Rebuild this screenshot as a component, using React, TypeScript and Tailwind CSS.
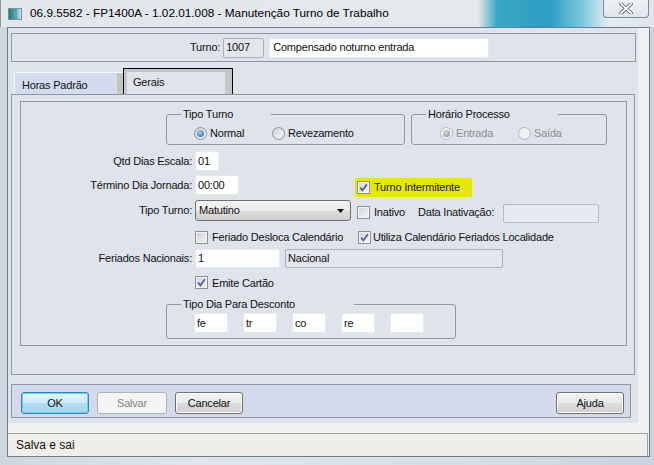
import { ReactNode } from "react";

function Check({ checked }: { checked?: boolean }) {
    return (
        <span className="w-[13px] h-[13px] shrink-0 border border-[#8e8f8f] bg-[linear-gradient(135deg,#cdd1d7,#f7f7f7)] flex items-center justify-center shadow-[inset_0_0_0_1px_#f4f4f4]">
            {checked && (
                <svg width="9" height="9" viewBox="0 0 9 9">
                    <path d="M1.2 4.6 L3.4 7.4 L7.9 1.2" stroke="#4b5d8f" strokeWidth="1.7" fill="none" />
                </svg>
            )}
        </span>
    )
}

function Radio({ checked, disabled }: { checked?: boolean, disabled?: boolean }) {
    return (
        <span className={"w-[13px] h-[13px] shrink-0 rounded-full border flex items-center justify-center " + (disabled ? "border-[#b5b8bc] bg-[#f0f0f0]" : "border-[#8e8f8f] bg-[linear-gradient(135deg,#cfd3d8,#f8f8f8)]")}>
            {checked && (
                <span className={"w-[7px] h-[7px] rounded-full " + (disabled ? "bg-[radial-gradient(circle_at_40%_35%,#d8d8d8,#8a8a8a)]" : "bg-[radial-gradient(circle_at_40%_35%,#9fd3f7,#1f5ea8)]")} />
            )}
        </span>
    )
}

function Field({ w, h = 20, value, gray, className = "" }: { w: number, h?: number, value?: string, gray?: boolean, className?: string }) {
    return (
        <div
            className={"shrink-0 rounded-[2px] border flex items-center px-[2px] " + (gray ? "bg-[#e3e6ed] border-[#aab1ba] " : "bg-white border-[#e6eaef] ") + className}
            style={{ width: w, height: h }}
        >
            {value}
        </div>
    )
}

function Group({ title, legendW, className = "", children }: { title: string, legendW: number, className?: string, children: ReactNode }) {
    return (
        <div className={"shrink-0 border border-[#8e97a3] rounded-[3px] flex flex-col " + className}>
            <span className="-mt-[8px] ml-[14px] h-[14px] leading-[14px] pl-[2px] bg-[#dfe3ec] self-start" style={{ width: legendW }}>{title}</span>
            {children}
        </div>
    )
}

function Button({ children, kind = "normal" }: { children: ReactNode, kind?: "ok" | "disabled" | "normal" }) {
    const look = {
        ok: "border-[#3c7fb1] bg-[linear-gradient(#e5f5fd,#c9e9f9_50%,#b2ddf4_51%,#a6d6f1)] shadow-[inset_0_0_0_1px_#6ad2f5] text-[#111]",
        disabled: "border-[#adb2b5] bg-[#f4f4f4] text-[#838383]",
        normal: "border-[#707070] bg-[linear-gradient(#f2f2f2,#ebebeb_50%,#dddddd_51%,#cfcfcf)] shadow-[inset_0_0_0_1px_#fbfbfb] text-[#111]",
    }[kind]
    return (
        <div className={"h-[22px] rounded-[3px] border flex items-center justify-center shrink-0 " + look}>
            {children}
        </div>
    )
}

function App() {
    return (
        <div className="w-[654px] h-[465px] overflow-hidden flex flex-col bg-[linear-gradient(90deg,#cdd6df,#dfe5eb_30%,#d6dee6_70%,#c9d3dd)] font-['Liberation_Sans',Arial,sans-serif] text-[11px] tracking-[-0.2px] text-[#111]">
            <div className="h-[27px] shrink-0 flex items-start bg-[linear-gradient(90deg,#e2e7ec_0%,#e4e9ee_73%,#3aa6c6_76%,#2c9fc2_84%,#7cc6dd_89%,#e6edf1_93%,#dfe5eb_100%)] border-l border-[#8a96a2]">
                <span className="mt-[8px] ml-[7px] w-[14px] h-[12px] border border-[#7d8b98] bg-[linear-gradient(90deg,#2f7a66,#5aa6c9_60%,#d9e6ee)]" />
                <span className="mt-[5px] ml-[8px] text-[11.8px] tracking-normal text-black">06.9.5582 - FP1400A - 1.02.01.008 - Manutenção Turno de Trabalho</span>
                <div className="ml-auto mr-[5px] w-[46px] h-[18px] rounded-b-[4px] border border-t-0 border-[#7c8996] bg-[linear-gradient(#eef2f5,#dfe6ec)] flex items-center justify-center">
                    <svg width="14" height="11" viewBox="0 0 14 11">
                        <path d="M2 1 L12 10 M12 1 L2 10" stroke="#5b6673" strokeWidth="3.6" strokeLinecap="square" />
                        <path d="M2 1 L12 10 M12 1 L2 10" stroke="#ffffff" strokeWidth="1.8" strokeLinecap="square" />
                    </svg>
                </div>
            </div>

            <div className="flex flex-row shrink-0">
                <div className="w-[7px]" />
                <div className="w-[643px] h-[430px] border border-[#6f7c89] bg-[#f0f0f0] flex flex-col">
                    <div className="h-[395px] w-[630px] bg-[#dfe3ec] flex flex-col pl-[3px]">
                        <div className="mt-[5px] w-[625px] h-[29px] border border-[#8e97a3] flex items-center pl-[178px]">
                            <span>Turno:</span>
                            <Field w={41} value="1007" gray className="ml-[3px]" />
                            <Field w={220} value="Compensado noturno entrada" className="ml-[5px] pl-[3px]" />
                        </div>

                        <div className="mt-[6px] h-[26px] flex items-end pl-[3px]">
                            <div className="w-[109px] h-[22px] flex border-t border-l border-[#f5f7fb] bg-[#d4dbee]">
                                <span className="flex-1 pl-[7px] pt-[4px]">Horas Padrão</span>
                                <span className="w-[6px] bg-[#c4c4c4]" />
                            </div>
                            <div className="w-[110px] h-[26px] border border-b-0 border-black flex">
                                <div className="flex-1 border-[3px] border-b-0 border-r-[7px] border-[#c6c6c6] bg-[#e1e4eb] pl-[6px] pt-[2px]">Gerais</div>
                            </div>
                        </div>

                        <div className="w-[624px] h-[281px] border border-[#8e97a3] flex flex-col">
                            <div className="mt-[6px] ml-[8px] w-[607px] h-[245px] border border-[#8e97a3] flex flex-col">
                                <div className="mt-[12px] flex items-start pl-[145px] gap-[6px]">
                                    <Group title="Tipo Turno" legendW={90} className="w-[239px] h-[31px]">
                                        <div className="flex items-center mt-[4px] pl-[27px]">
                                            <Radio checked />
                                            <span className="ml-[3px] w-[62px]">Normal</span>
                                            <Radio />
                                            <span className="ml-[3px]">Revezamento</span>
                                        </div>
                                    </Group>
                                    <Group title="Horário Processo" legendW={132} className="w-[196px] h-[31px]">
                                        <div className="flex items-center mt-[4px] pl-[28px] text-[#8d8d8d]">
                                            <Radio checked disabled />
                                            <span className="ml-[3px] w-[62px]">Entrada</span>
                                            <Radio disabled />
                                            <span className="ml-[3px]">Saída</span>
                                        </div>
                                    </Group>
                                </div>

                                <div className="mt-[6px] flex items-center">
                                    <span className="w-[171px] text-right">Qtd Dias Escala:</span>
                                    <Field w={24} value="01" className="ml-[3px]" />
                                </div>

                                <div className="mt-[4px] flex items-start">
                                    <span className="w-[171px] text-right leading-[20px]">Término Dia Jornada:</span>
                                    <Field w={44} value="00:00" className="ml-[3px]" />
                                    <div className="ml-[116px] mt-[3px] w-[117px] h-[19px] bg-[#e6e800] rounded-[2px] flex items-center pl-[2px]">
                                        <Check checked />
                                        <span className="ml-[4px]">Turno Intermitente</span>
                                    </div>
                                </div>

                                <div className="mt-[3px] flex items-start">
                                    <span className="w-[171px] text-right leading-[21px]">Tipo Turno:</span>
                                    <div className="ml-[3px] w-[156px] h-[21px] rounded-[3px] border border-[#707070] bg-[linear-gradient(#f2f2f2,#ebebeb_50%,#dddddd_51%,#cfcfcf)] flex items-center pl-[3px] pr-[6px]">
                                        <span className="flex-1">Matutino</span>
                                        <svg width="7" height="4" viewBox="0 0 7 4"><path d="M0 0 H7 L3.5 4 Z" fill="#111" /></svg>
                                    </div>
                                    <div className="ml-[6px] mt-[4px] flex items-center">
                                        <Check />
                                        <span className="ml-[4px]">Inativo</span>
                                        <span className="ml-[13px]">Data Inativação:</span>
                                    </div>
                                    <Field w={96} h={19} gray className="ml-[9px] mt-[4px] bg-[#e6e9f0]! border-[#b4bbc4]!" />
                                </div>

                                <div className="mt-[6px] flex items-center pl-[174px]">
                                    <div className="w-[163px] flex items-center">
                                        <Check />
                                        <span className="ml-[4px]">Feriado Desloca Calendário</span>
                                    </div>
                                    <Check checked />
                                    <span className="ml-[2px]">Utiliza Calendário Feriados Localidade</span>
                                </div>

                                <div className="mt-[3px] flex items-center">
                                    <span className="w-[171px] text-right">Feriados Nacionais:</span>
                                    <Field w={85} h={19} value="1" className="ml-[3px]" />
                                    <Field w={218} h={19} value="Nacional" gray className="ml-[5px]" />
                                </div>

                                <div className="mt-[7px] flex items-center pl-[174px]">
                                    <Check checked />
                                    <span className="ml-[4px]">Emite Cartão</span>
                                </div>

                                <div className="mt-[13px] flex pl-[145px]">
                                    <Group title="Tipo Dia Para Desconto" legendW={173} className="w-[290px] h-[35px]">
                                        <div className="flex mt-[2px] pl-[27px] gap-[15px]">
                                            <Field w={34} value="fe" />
                                            <Field w={34} value="tr" />
                                            <Field w={34} value="co" />
                                            <Field w={34} value="re" />
                                            <Field w={34} />
                                        </div>
                                    </Group>
                                </div>
                            </div>
                        </div>

                        <div className="mt-[9px] w-[620px] h-[34px] border border-[#8e97a3] bg-[#d2daeb] flex items-start pt-[7px] pl-[9px]">
                            <div className="w-[68px]"><Button kind="ok">OK</Button></div>
                            <div className="w-[70px] ml-[8px]"><Button kind="disabled">Salvar</Button></div>
                            <div className="w-[68px] ml-[8px]"><Button>Cancelar</Button></div>
                            <div className="w-[68px] ml-auto mr-[6px]"><Button>Ajuda</Button></div>
                        </div>
                    </div>
                    <div className="h-[10px]" />
                    <div className="h-[23px] border-t border-r border-[#a3a3a3] bg-[#f0eeeb] flex items-center pl-[8px] text-[12px] tracking-normal w-[640px]">
                        Salva e sai
                    </div>
                </div>
            </div>
        </div>
    )
}

export default App;
